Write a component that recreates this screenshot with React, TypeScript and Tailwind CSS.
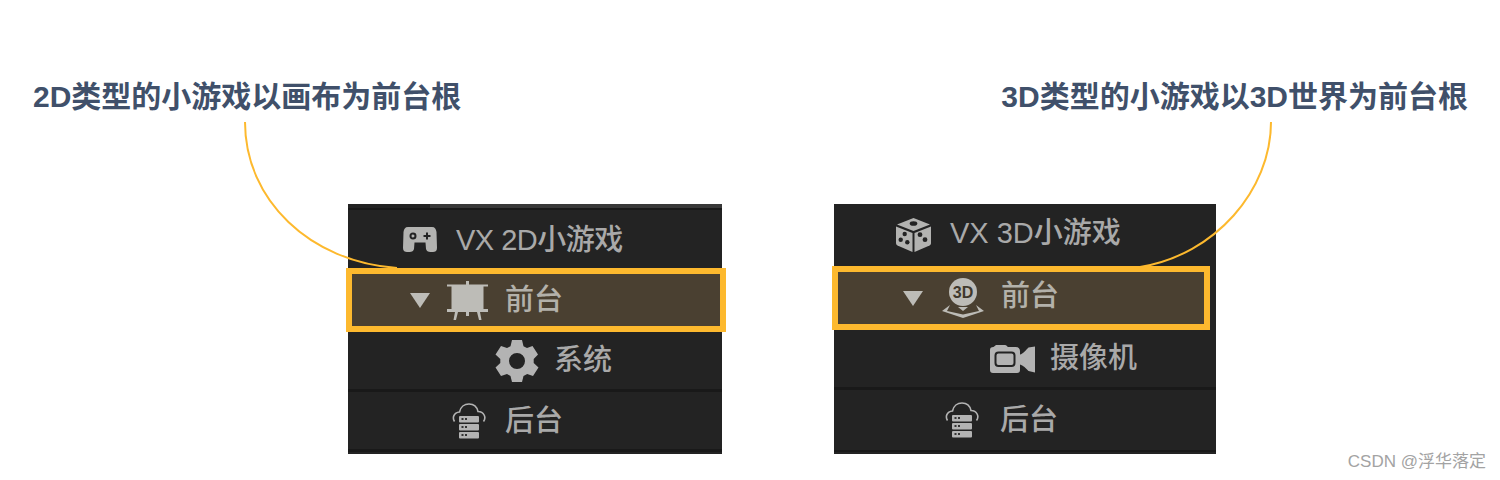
import type { ReactNode } from "react";

const cjk = { fontFamily: '"Liberation Sans", "Noto Sans CJK SC", sans-serif' };

const GamepadIcon = () => (
  <svg width="34" height="25" viewBox="0 0 34 25" className="shrink-0">
    <path
      fillRule="evenodd"
      fill="#b3b3b1"
      d="M5 0H29C32 0 33 2 33.500 5L34 21C34 24 32 25 30 25H27.500C25 25 23.500 24 23 22L22.500 15.500H11.500L11 22C10.500 24 9 25 6.500 25H4C2 25 0 24 0 21L.5 5C1 2 2 0 5 0ZM10 5.500A3.500 3.500 0 1 0 10.010 12.500A3.500 3.500 0 1 0 10 5.500ZM10 7.500A1.500 1.500 0 1 1 9.990 10.500A1.500 1.500 0 1 1 10 7.500ZM23 5.500V8H20.500V10H23V12.500H25V10H27.500V8H25V5.500Z"
    />
  </svg>
);

const EaselIcon = () => (
  <svg width="41" height="39" viewBox="0 0 41 39" className="shrink-0">
    <g fill="#bdbcb7">
      <rect x="19" y="0" width="3" height="4" />
      <rect x="0" y="3.500" width="41" height="2" />
      <rect x="4.500" y="4" width="32" height="25" />
      <rect x="0" y="28" width="41" height="3" />
      <path d="M8 31H11L9 39H6.500Z" />
      <path d="M30 31H33L34.500 39H32Z" />
      <rect x="19" y="31" width="3" height="4" />
    </g>
  </svg>
);

const GearIcon = () => (
  <svg width="44" height="42" viewBox="0 0 44 42" className="shrink-0">
    <path
      fillRule="evenodd"
      fill="#b3b3b3"
      d="M17 0H27L28.500 6.200L32 8L37.500 6L43 14.500L38.700 19V23L43.500 27.500L38 36L32.200 34L28.500 36L27 42H17L15.500 36L12 34L6 36L.5 27.500L5.300 23V19L.5 14.500L6 6L12 8L15.500 6.200ZM22 13A8 8 0 1 0 22.010 29A8 8 0 1 0 22 13Z"
    />
  </svg>
);

const CloudServerIcon = () => (
  <svg width="34" height="36" viewBox="0 0 34 36" className="shrink-0">
    <path
      d="M2.500 18.500C.2 15 1.500 9.500 7.500 9C8.500 4 12.500 1 17 1C21.500 1 25 4 26 8.500C32 8.500 34.500 14.500 31.500 18.500"
      fill="none"
      stroke="#b3b3b3"
      strokeWidth="1.600"
    />
    <g fill="#b3b3b3">
      <rect x="7" y="13" width="20" height="6.500" rx="1" />
      <rect x="7" y="21" width="20" height="6.500" rx="1" />
      <rect x="7" y="29" width="20" height="6.500" rx="1" />
    </g>
    <g fill="#333333">
      <rect x="9.500" y="15" width="2" height="2" />
      <rect x="13" y="15" width="2" height="2" />
      <rect x="9.500" y="23" width="2" height="2" />
      <rect x="13" y="23" width="2" height="2" />
      <rect x="9.500" y="31" width="2" height="2" />
      <rect x="13" y="31" width="2" height="2" />
    </g>
  </svg>
);

const DiceIcon = () => (
  <svg width="35" height="34" viewBox="0 0 35 34" className="shrink-0">
    <path fill="#b3b3b1" d="M17.500 0L34 6.500L17.500 13L1 6.500Z" />
    <path fill="#b3b3b1" d="M0 8.500L16.500 15V34L1.500 27.500C.5 27 0 26 0 25Z" />
    <path fill="#b3b3b1" d="M35 8.500L18.500 15V34L33.500 27.500C34.500 27 35 26 35 25Z" />
    <g fill="#232323">
      <ellipse cx="17.500" cy="5.500" rx="3.800" ry="2.300" />
      <circle cx="8.700" cy="16" r="2.200" />
      <circle cx="4.700" cy="21.700" r="2.200" />
      <circle cx="11.300" cy="24.300" r="2.200" />
      <circle cx="24" cy="16.700" r="2.400" />
      <circle cx="29" cy="21.700" r="2.400" />
    </g>
  </svg>
);

const Globe3DIcon = () => (
  <svg width="44" height="40" viewBox="0 0 44 40" className="shrink-0">
    <circle cx="22" cy="14" r="14" fill="#bdbcb7" />
    <text
      x="22"
      y="19.500"
      textAnchor="middle"
      fontSize="16"
      fontWeight="700"
      fill="#3f382c"
      fontFamily='"Liberation Sans", sans-serif'
    >
      3D
    </text>
    <path d="M9 27L1 33L22 40L43 33L35 27L38 33L22 36.500L6 33Z" fill="#bdbcb7" />
    <path d="M17 29H27L22 33Z" fill="#bdbcb7" />
  </svg>
);

const CameraIcon = () => (
  <svg width="45" height="28" viewBox="0 0 45 28" className="shrink-0">
    <path
      fill="#b3b3b3"
      d="M6 0H15C16.500 0 17 1.500 18 2H26C28.500 2 30 4 30 6V9.500C33 9 36 5 38.500 2.500L45 1.500V27.500L38.500 26C36 23.500 33 20 30 19.500V25C30 27 29 28 27 28H3C1 28 0 27 0 25V5C0 3 1 2 3.500 2Z"
    />
    <rect x="5.500" y="7.500" width="19" height="13.500" rx="3" fill="none" stroke="#232323" strokeWidth="2" />
  </svg>
);

const Caret = () => (
  <svg width="20" height="15" viewBox="0 0 20 15" className="shrink-0">
    <path d="M0 0H20L10 15Z" fill="#bdbcb7" />
  </svg>
);

const Label = ({ children, className = "text-[#a9a9a9]" }: { children: ReactNode; className?: string }) => (
  <span className={`text-[29px] leading-none whitespace-nowrap font-medium ${className}`} style={cjk}>
    {children}
  </span>
);

const Heading = ({ children }: { children: ReactNode }) => (
  <h2 className="text-[30px] leading-[34px] font-bold text-[#40506a] whitespace-nowrap" style={cjk}>
    {children}
  </h2>
);

const App = () => {
  return (
    <div className="relative w-[1500px] h-[480px] overflow-hidden bg-white">
      <div className="flex justify-between pl-[33px] pr-[32px] pt-[80px] h-[204px]">
        <Heading>2D类型的小游戏以画布为前台根</Heading>
        <Heading>3D类型的小游戏以3D世界为前台根</Heading>
      </div>

      <div className="flex pl-[348px] gap-[112px]">
        {/* 2D tree */}
        <div className="flex flex-col w-[374px] h-[250px] bg-[#232323]">
          <div className="h-[6px] flex border-b-2 border-[#191919]">
            <div className="w-[82px] bg-[#232323]" />
            <div className="flex-1 bg-[#383838]" />
          </div>
          <div className="h-[58px] flex items-center pl-[55px] gap-[19px]">
            <GamepadIcon />
            <Label className="text-[#a9a9a9] tracking-[-0.5px] mt-[2px]">VX 2D小游戏</Label>
          </div>
          <div className="h-[64px] -ml-[2px] -mr-[4px] relative z-10 flex items-center pl-[58px] border-[6px] border-[#fdb92e] bg-[#4a4031]">
            <Caret />
            <div className="ml-[17px] mr-[17px] flex">
              <EaselIcon />
            </div>
            <Label className="text-[#b3b1aa]">前台</Label>
          </div>
          <div className="h-[60px] flex items-center pl-[147px] gap-[15px] border-b-[3px] border-[#191919]">
            <GearIcon />
            <Label>系统</Label>
          </div>
          <div className="h-[60px] flex items-center pl-[104px] gap-[19px] border-b-[3px] border-[#191919]">
            <CloudServerIcon />
            <Label className="text-[#a9a9a9] mt-[2px]">后台</Label>
          </div>
        </div>

        {/* 3D tree */}
        <div className="flex flex-col w-[382px] h-[250px] bg-[#232323]">
          <div className="h-[62px] flex items-center pl-[62px] gap-[19px]">
            <DiceIcon />
            <Label className="text-[#a9a9a9] mb-[3px]">VX 3D小游戏</Label>
          </div>
          <div className="h-[64px] -ml-[2px] mr-[6px] relative z-10 flex items-center pl-[65px] border-[6px] border-[#fdb92e] bg-[#4a4031]">
            <Caret />
            <div className="ml-[18px] mr-[16px] flex">
              <Globe3DIcon />
            </div>
            <Label className="text-[#b3b1aa] mb-[3px]">前台</Label>
          </div>
          <div className="h-[60px] flex items-center pl-[156px] gap-[15px] border-b-[3px] border-[#191919]">
            <CameraIcon />
            <Label className="text-[#a9a9a9] mb-[1px]">摄像机</Label>
          </div>
          <div className="h-[62px] flex items-center pl-[111px] gap-[21px] border-b-[2px] border-[#191919]">
            <CloudServerIcon />
            <Label>后台</Label>
          </div>
        </div>
      </div>

      {/* callout lines */}
      <svg width="1500" height="480" className="absolute inset-0 z-20 pointer-events-none">
        <path d="M245 122C245 200 310 262 397 268" fill="none" stroke="#fdb92e" strokeWidth="2" />
        <path d="M1271 122C1271 190 1215 255 1140 267" fill="none" stroke="#fdb92e" strokeWidth="2" />
      </svg>

      <span
        className="absolute right-[14px] top-[452px] text-[17px] leading-[20px] text-[#a3a3a3] whitespace-nowrap"
        style={cjk}
      >
        CSDN @浮华落定
      </span>
    </div>
  );
};

export default App;
